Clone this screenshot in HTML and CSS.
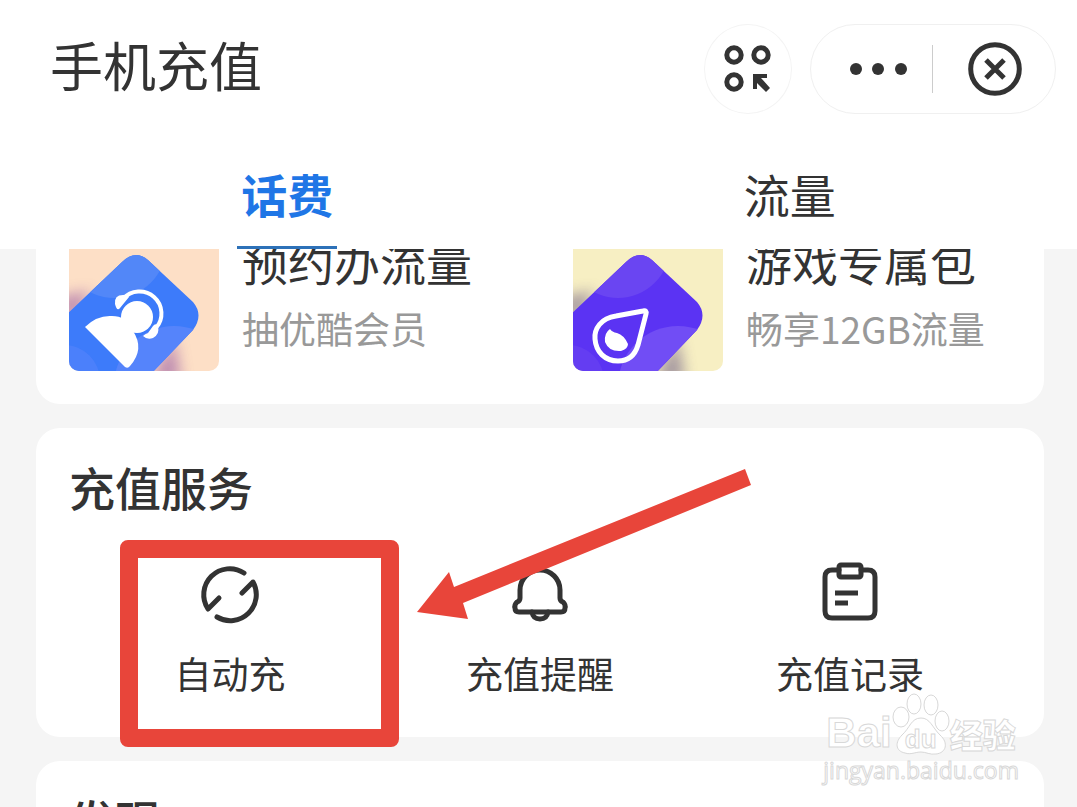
FILE: index.html
```html
<!DOCTYPE html>
<html lang="zh-CN">
<head>
  <meta charset="UTF-8">
  <meta name="viewport" content="width=device-width, initial-scale=1.0">
  <title>手机充值</title>
  <link rel="stylesheet" href="styles.css">
</head>
<body>
  <header class="header">
    <div class="title-bar">
      <h1>手机充值</h1>
      <button class="round-btn" aria-label="小程序">
        <svg width="50" height="50" viewBox="0 0 50 50" fill="none" stroke="#333" stroke-width="5">
          <circle cx="11" cy="11" r="7.2"/>
          <circle cx="38" cy="11" r="7.2"/>
          <circle cx="11" cy="38" r="7.2"/>
          <path d="M30 30H44V34H38L47 44L43 48L34 39V45H30Z" fill="#333" stroke="none"/>
        </svg>
      </button>
      <div class="capsule">
        <button aria-label="更多">
          <svg width="60" height="20" viewBox="0 0 60 20" fill="#333">
            <circle cx="7" cy="10" r="6"/>
            <circle cx="29" cy="10" r="6"/>
            <circle cx="52" cy="10" r="6"/>
          </svg>
        </button>
        <button aria-label="关闭">
          <svg width="56" height="56" viewBox="0 0 56 56" fill="none" stroke="#333" stroke-width="5">
            <circle cx="29" cy="28" r="24.3"/>
            <path d="M20 19L38 37M38 19L20 37"/>
          </svg>
        </button>
      </div>
    </div>
    <nav class="tabs">
      <a href="#fee" class="tab active">话费</a>
      <a href="#data" class="tab">流量</a>
    </nav>
  </header>

  <main class="main">
    <section class="card promos">
      <a href="#reserve" class="promo">
        <svg class="thumb" viewBox="0 0 150 150">
          <defs>
            <filter id="soft" x="-50%" y="-50%" width="200%" height="200%"><feGaussianBlur stdDeviation="7"/></filter>
            <clipPath id="tile"><path d="M-5 96L53 41Q66 28 79 39L124 81Q135 94 124 109L80 155H-5Z"/></clipPath>
          </defs>
          <rect width="150" height="150" fill="#fddfc6"/>
          <path d="M-10 76L22 70L0 110ZM80 160L105 116L112 160Z" fill="#a46aa8" opacity=".7" filter="url(#soft)"/>
          <g clip-path="url(#tile)">
            <rect x="-5" width="150" height="155" fill="#3d7bfa"/>
            <circle cx="45" cy="25" r="52" fill="#5287f8"/>
            <circle cx="105" cy="165" r="60" fill="#5584fb"/>
            <circle cx="-5" cy="160" r="36" fill="#5584fb" opacity=".6"/>
          </g>
          <g fill="#fff">
            <path d="M16 106Q28 94 43 95Q50 95 55 98L64 110Q76 128 61 145Q59 148 56 146Z"/>
            <path d="M46 83Q45 74 54 74Q59 73 60 76L51 87Q48 91 46 83ZM89 106Q91 113 84 117Q78 119 74 115Q76 113 79 112L84 105Q87 101 89 106Z"/>
          </g>
          <path d="M54 78A21 21 0 0 1 87 107" fill="none" stroke="#fff" stroke-width="4"/>
          <circle cx="68" cy="96" r="16" fill="#fff"/>
        </svg>
        <div class="promo-text">
          <div class="promo-name">预约办流量</div>
          <div class="promo-desc">抽优酷会员</div>
        </div>
      </a>
      <a href="#game" class="promo">
        <svg class="thumb" viewBox="0 0 150 150">
          <rect width="150" height="150" fill="#f7efc3"/>
          <path d="M-10 76L22 70L0 110ZM80 160L105 116L112 160Z" fill="#8a7b94" opacity=".75" filter="url(#soft)"/>
          <g clip-path="url(#tile)">
            <rect x="-5" width="150" height="155" fill="#5b33f3"/>
            <circle cx="45" cy="25" r="52" fill="#6a45f2"/>
            <circle cx="105" cy="165" r="60" fill="#714df5"/>
            <circle cx="-5" cy="160" r="36" fill="#6a45f2" opacity=".6"/>
          </g>
          <path d="M70 90L43 95C28 97 21 108 22 118C23 131 32 140 45 140C55 140 62 134 65 124L73 93Q74 89 70 90Z" fill="none" stroke="#fff" stroke-width="5"/>
          <path d="M37 108Q39 111 44 112Q51 114 55 123Q55 128 48 130Q36 131 32 121Q31 112 37 108Z" fill="#fff"/>
        </svg>
        <div class="promo-text">
          <div class="promo-name">游戏专属包</div>
          <div class="promo-desc">畅享12GB流量</div>
        </div>
      </a>
    </section>

    <section class="card services">
      <h2>充值服务</h2>
      <div class="service-list">
        <a href="#auto" class="service marked">
          <svg class="icon" viewBox="0 0 60 60">
            <path d="M44 8A26 26 0 0 0 8 44L19 33"/>
            <path d="M17 52A26 26 0 0 0 53 17L42 28"/>
          </svg>
          <span>自动充</span>
        </a>
        <a href="#remind" class="service">
          <svg class="icon" viewBox="0 0 60 60">
            <path d="M10 25A20 20 0 0 1 50 25V33Q50 36 53 37Q56 40 55 43Q55 47 51 47H9Q5 47 5 43Q4 40 7 37Q10 36 10 33Z"/>
            <path d="M22 47Q23 54 30 54Q37 54 38 47"/>
          </svg>
          <span>充值提醒</span>
        </a>
        <a href="#record" class="service">
          <svg class="icon" viewBox="0 0 60 60">
            <path d="M19 5H12Q5 5 5 12V46Q5 53 12 53H48Q55 53 55 46V12Q55 5 48 5H41"/>
            <rect x="19" y="0" width="22" height="12" rx="2"/>
            <path d="M15 28H38M15 38H28" stroke-linecap="butt"/>
          </svg>
          <span>充值记录</span>
        </a>
      </div>
      <svg class="arrow" viewBox="0 0 335 151">
        <path d="M0 143L32 103L37 118L328 0L334 16L46 134L51 150Z"/>
      </svg>
    </section>

    <section class="card">
      <h2>发现</h2>
    </section>
  </main>

  <div class="watermark">
    <div class="brand">
      <span class="bai">Bai</span>
      <span class="paw">
        <svg width="58" height="62" viewBox="0 0 58 62">
          <ellipse cx="9" cy="24" rx="8" ry="10"/>
          <ellipse cx="22" cy="11" rx="7" ry="10"/>
          <ellipse cx="39" cy="12" rx="7" ry="10"/>
          <ellipse cx="50" cy="28" rx="7" ry="10"/>
          <path d="M29 25C38 25 40 34 48 42C57 50 54 60 44 61C38 62 34 59 29 59C23 59 19 62 13 60C3 58 3 49 10 42C18 35 19 25 29 25Z"/>
        </svg>
        <span class="du">du</span>
      </span>
      <span class="jingyan">经验</span>
    </div>
    <div class="site">jingyan.baidu.com</div>
  </div>
</body>
</html>
```
FILE: styles.css
```css
* { box-sizing: border-box; }
body { margin: 0; height: 100vh; display: flex; flex-direction: column; overflow: hidden; position: relative; background: #f5f5f5; color: #333; font-family: "Noto Sans CJK SC", sans-serif; }
h1, h2 { margin: 0; }
a { color: inherit; text-decoration: none; }
button { border: 0; padding: 0; background: none; cursor: pointer; }
svg { display: block; }

.header { background: #fff; position: relative; z-index: 1; }
.title-bar { display: flex; align-items: center; gap: 18px; padding: 24px 21px 0 50px; }
.title-bar h1 { flex: 1; padding-bottom: 10px; font-size: 53px; line-height: 80px; font-weight: 400; }
.round-btn { width: 88px; height: 90px; border: 1px solid #f4f4f4; border-radius: 50%; display: flex; align-items: center; justify-content: center; }
.capsule { width: 246px; height: 90px; border: 1px solid #f0f0f0; border-radius: 45px; display: flex; align-items: center; }
.capsule button { width: 122px; height: 48px; display: flex; align-items: center; justify-content: center; }
.capsule button:first-child { border-right: 1px solid #ccc; padding-left: 14px; }

.tabs { display: flex; padding: 48px 36px 0; }
.tab { margin: 0 auto; padding: 0 4px 22px; border-bottom: 3px solid transparent; font-size: 46px; line-height: 62px; }
.tab.active { color: #1f76e6; border-color: #2d71b8; font-weight: 700; }

.main { flex: 1; overflow: hidden; padding: 0 33px 0 36px; display: flex; flex-direction: column; gap: 24px; }
.card { flex: none; background: #fff; border-radius: 24px; padding: 27px 33px 37px; position: relative; }
.card h2 { font-size: 46px; line-height: 62px; font-weight: 500; }

/* list is scrolled a little under the tabs */
.promos { margin-top: -60px; padding: 32px 0 33px; display: grid; grid-template-columns: 1fr 1fr; }
.promo { display: flex; align-items: center; gap: 23px; padding-left: 33px; }
.thumb { width: 150px; height: 150px; border-radius: 10px; }
.promo-text { padding-bottom: 8px; }
.promo-name { font-size: 46px; line-height: 62px; }
.promo-desc { margin-top: 10px; font-size: 37px; line-height: 52px; color: #999; }

.service-list { display: grid; grid-template-columns: repeat(3, 1fr); margin: 48px 6px 0; }
.service { display: flex; flex-direction: column; align-items: center; gap: 21px; font-size: 37px; line-height: 54px; position: relative; }
.icon { width: 60px; height: 60px; overflow: visible; fill: none; stroke: #333; stroke-width: 5; stroke-linecap: round; stroke-linejoin: round; }
.marked::after { content: ""; position: absolute; top: -25px; bottom: -47px; left: 45px; right: -14px; border: 18px solid #e8453a; border-radius: 8px; }
.arrow { position: absolute; left: 381px; top: 41px; width: 335px; height: 151px; fill: #e8453a; }

.watermark { position: absolute; right: 58px; bottom: 22px; z-index: 2; color: #fff; font-weight: 700; -webkit-text-stroke: 1px #d8d8d8; }
.brand { display: flex; align-items: flex-end; padding-left: 9px; }
.bai { font: 700 42px/44px "Liberation Sans", sans-serif; }
.paw { position: relative; }
.paw svg { fill: #fff; stroke: #d8d8d8; }
.du { position: absolute; left: 0; right: 0; bottom: 2px; text-align: center; font: 700 26px/28px "Liberation Sans", sans-serif; }
.jingyan { font-size: 33px; line-height: 42px; font-weight: 900; }
.site { padding-left: 6px; font: 400 23px/30px "Open Sans", sans-serif; }
```
